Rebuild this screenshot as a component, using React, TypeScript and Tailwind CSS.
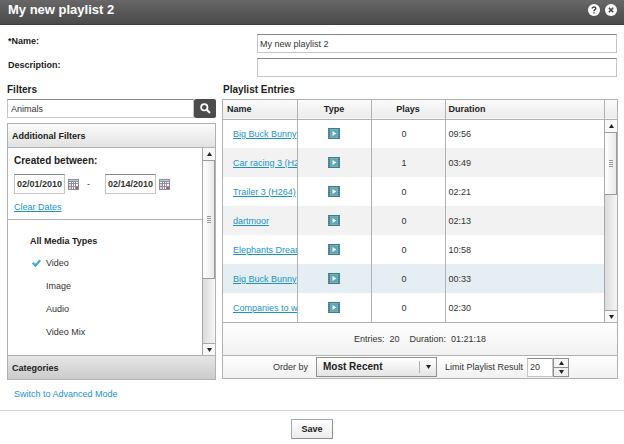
import { useState } from "react";

const entries = [
  { name: "Big Buck Bunny", plays: 0, duration: "09:56" },
  { name: "Car racing 3 (H264)", plays: 1, duration: "03:49" },
  { name: "Trailer 3 (H264)", plays: 0, duration: "02:21" },
  { name: "dartmoor", plays: 0, duration: "02:13" },
  { name: "Elephants Dream", plays: 0, duration: "10:58" },
  { name: "Big Buck Bunny", plays: 0, duration: "00:33", selected: true },
  { name: "Companies to w", plays: 0, duration: "02:30" },
];

const mediaTypes = ["Video", "Image", "Audio", "Video Mix"];

function Arrow({ up = false }: { up?: boolean }) {
  return (
    <svg viewBox="0 0 5 4" className="h-1 w-[5px] shrink-0 fill-[#222]" aria-hidden="true">
      <path d={up ? "M0 4 2.5 0 5 4z" : "M0 0h5L2.5 4z"} />
    </svg>
  );
}

function FilmIcon() {
  return (
    <svg viewBox="0 0 12 11" className="mx-auto block h-[11px] w-3" role="img" aria-label="Video">
      <rect width="12" height="11" fill="#3f7c8a" />
      <rect x="2.5" y="1.5" width="7" height="8" fill="#5fa5b3" stroke="#79adb8" />
      <path d="M1 1v9M11 1v9" stroke="#7aa9b3" strokeDasharray="1 1" />
      <path d="M4.5 3v5l3.8-2.500z" fill="#fff" />
    </svg>
  );
}

function CalendarIcon() {
  return (
    <svg viewBox="0 0 11 11" className="h-[11px] w-[11px]" aria-hidden="true">
      <rect width="11" height="11" fill="#8d8f9f" />
      <path d="M1 1h9v1H1z" fill="#c3cbe0" />
      <path d="M1 3h2v1H1zM4 3h1v1H4zM6 3h1v1H6zM8 3h2v1H8z" fill="#fff" />
      <path d="M4 5h1v2H4zM6 5h1v2H6zM8 5h2v2H8zM4 8h1v2H4zM6 8h1v2H6z" fill="#fff" />
      <path d="M1 5h2v2H1zM1 8h2v2H1z" fill="#f3c9c0" />
      <path d="M8 8h2v2H8z" fill="#c9534a" />
    </svg>
  );
}

function ScrollBar({ thumb }: { thumb: string }) {
  return (
    <div className="flex w-[13px] shrink-0 flex-col border-l border-[#a5a8a8] bg-gradient-to-r from-[#dcdcdc] to-[#f5f5f5]">
      <button aria-label="Scroll up" className="flex h-3 shrink-0 items-center justify-center bg-[#f8f8f8]">
        <Arrow up />
      </button>
      <div
        className={`flex shrink-0 flex-col items-center justify-center gap-px border-y border-r border-[#9a9c9c] bg-gradient-to-r from-white to-[#e9e9e9] ${thumb}`}
      >
        <span className="h-px w-1 bg-[#999]" />
        <span className="h-px w-1 bg-[#999]" />
        <span className="h-px w-1 bg-[#999]" />
        <span className="h-px w-1 bg-[#999]" />
      </div>
      <button
        aria-label="Scroll down"
        className="mt-auto flex h-3 shrink-0 items-center justify-center border-t border-[#a5a8a8] bg-[#f8f8f8]"
      >
        <Arrow />
      </button>
    </div>
  );
}

const field = "border border-[#c4c6c6] border-t-[#858888] bg-white outline-none";

function DateField({ label, initial }: { label: string; initial: string }) {
  return (
    <div className="flex items-center gap-[3px]">
      <input aria-label={label} defaultValue={initial} className={`h-5 w-[51px] px-[2px] font-bold ${field}`} />
      <button aria-label={`${label} calendar`}>
        <CalendarIcon />
      </button>
    </div>
  );
}

export default function App() {
  const [types, setTypes] = useState<string[]>(["Video"]);
  const toggle = (t: string) => setTypes(types.includes(t) ? types.filter((x) => x !== t) : [...types, t]);

  return (
    <div className="min-h-screen bg-white font-['Liberation_Sans',Arial,sans-serif] text-[9px] leading-3 text-[#333]">
      <header className="flex h-[25px] items-center justify-between border-b border-[#3c3c3c] bg-gradient-to-b from-[#666766] to-[#494a49] pr-[7px] pl-2 text-white">
        <h1 className="pb-1 text-[13px] leading-4 font-bold">My new playlist 2</h1>
        <div className="flex gap-[5px] pb-1">
          <button aria-label="Help">
            <svg viewBox="0 0 12 12" className="block h-3 w-3" fill="none">
              <circle cx="6" cy="6" r="6" fill="#fff" />
              <path d="M4.2 4.6c0-2.2 3.6-2.2 3.6-.2C7.8 5.700 6 5.500 6 7.200M6 8.200v1.400" stroke="#444" strokeWidth="1.500" />
            </svg>
          </button>
          <button aria-label="Close">
            <svg viewBox="0 0 12 12" className="block h-3 w-3" fill="none">
              <circle cx="6" cy="6" r="6" fill="#fff" />
              <path d="m3.800 3.800 4.400 4.400M8.200 3.800 3.800 8.200" stroke="#444" strokeWidth="1.600" />
            </svg>
          </button>
        </div>
      </header>

      <form onSubmit={(e) => e.preventDefault()}>
        <div className="flex flex-col gap-[5px] pt-[9px] pr-[7px] pl-2">
          <div className="flex">
            <label htmlFor="name" className="w-[249px] shrink-0 pt-px font-bold text-[#222]">
              *Name:
            </label>
            <input id="name" defaultValue="My new playlist 2" className={`h-[19px] min-w-0 flex-1 px-[2px] ${field}`} />
          </div>
          <div className="flex">
            <label htmlFor="description" className="w-[249px] shrink-0 pt-px font-bold text-[#222]">
              Description:
            </label>
            <input id="description" className={`h-[19px] min-w-0 flex-1 px-[2px] ${field}`} />
          </div>
        </div>

        <div className="grid grid-cols-[209px_minmax(0,1fr)] gap-x-[6px] pt-[7px] pr-[6px] pl-[7px]">
          <section>
            <h2 className="pb-[3px] text-[10px] font-bold text-[#222]">Filters</h2>
            <div className="flex">
              <input aria-label="Search" defaultValue="Animals" className={`h-[19px] min-w-0 flex-1 px-[3px] ${field}`} />
              <button aria-label="Run search" className="flex h-[19px] w-[22px] items-center justify-center rounded-xs bg-[#4b4c4b]">
                <svg viewBox="0 0 11 11" className="h-[11px] w-[11px]" fill="none" stroke="#fff">
                  <circle cx="4.300" cy="4.300" r="3.200" strokeWidth="1.700" />
                  <path d="m6.800 6.800 3.200 3.200" strokeWidth="2.200" />
                </svg>
              </button>
            </div>

            <div className="mt-[5px] border border-[#b0b2b2]">
              <button className="flex h-6 w-full items-center border-b border-[#b0b2b2] bg-gradient-to-b from-[#fbfbfb] to-[#e2e2e2] px-1 font-bold text-[#222]">
                Additional Filters
              </button>
              <div className="flex">
                <div className="min-w-0 flex-1">
                  <div className="border-b border-[#b0b2b2] px-[6px] pt-[7px] pb-[6px]">
                    <h3 className="text-[10px] font-bold text-[#222]">Created between:</h3>
                    <div className="mt-[7px] mb-[7px] flex items-center">
                      <DateField label="From" initial="02/01/2010" />
                      <span className="w-[26px] pl-2">-</span>
                      <DateField label="To" initial="02/14/2010" />
                    </div>
                    <a href="#clear" className="text-[#1a94c8] underline">
                      Clear Dates
                    </a>
                  </div>
                  <fieldset className="h-[135px] overflow-hidden px-[22px] pt-[15px]">
                    <legend className="float-left mb-1 w-full font-bold text-[#222]">All Media Types</legend>
                    {mediaTypes.map((t) => (
                      <label key={t} className="flex h-[23px] w-full items-center gap-[5px] pl-[2px]">
                        <input
                          type="checkbox"
                          checked={types.includes(t)}
                          onChange={() => toggle(t)}
                          className="peer sr-only"
                        />
                        <svg
                          viewBox="0 0 9 8"
                          className="h-2 w-[9px] opacity-0 peer-checked:opacity-100"
                          fill="none"
                          stroke="#45a9d3"
                          strokeWidth="2.400"
                        >
                          <path d="m.8 3.800 2.700 2.700L8.200 1.200" />
                        </svg>
                        {t}
                      </label>
                    ))}
                  </fieldset>
                </div>
                <ScrollBar thumb="h-[119px]" />
              </div>
              <button className="flex h-6 w-full items-center border-t border-[#b0b2b2] bg-gradient-to-b from-[#e6e6e6] to-[#cbcbcb] px-1 font-bold text-[#222]">
                Categories
              </button>
            </div>
            <a href="#advanced" className="mt-2 ml-[7px] inline-block text-[#1a94c8]">
              Switch to Advanced Mode
            </a>
          </section>

          <section>
            <h2 className="pb-[3px] pl-px text-[10px] font-bold text-[#222]">Playlist Entries</h2>
            <div className="border border-[#b0b2b2]">
              <div className="relative">
                <table className="w-full table-fixed border-collapse">
                  <colgroup>
                    <col className="w-[74px]" />
                    <col className="w-[74px]" />
                    <col className="w-[74px]" />
                    <col />
                    <col className="w-[13px]" />
                  </colgroup>
                  <thead>
                    <tr className="h-[19px] border-b border-[#b0b2b2] bg-gradient-to-b from-[#fbfbfb] to-[#ebebeb] text-[#222]">
                      <th className="border-r border-[#b0b2b2] pl-1 text-left">Name</th>
                      <th className="border-r border-[#b0b2b2]">Type</th>
                      <th className="border-r border-[#b0b2b2]">Plays</th>
                      <th className="border-r border-[#b0b2b2] pl-[3px] text-left">Duration</th>
                      <td />
                    </tr>
                  </thead>
                  <tbody>
                    {entries.map((e, i) => (
                      <tr key={i} className={`h-[29px] ${e.selected ? "bg-[#e5eef2]" : i % 2 ? "bg-[#f2f2f2]" : "bg-white"}`}>
                        <td className="overflow-hidden border-r border-[#b0b2b2] pl-[10px] whitespace-nowrap">
                          <a href={`#entry-${i}`} className="text-[#1a94c8] underline">
                            {e.name}
                          </a>
                        </td>
                        <td className="border-r border-[#b0b2b2]">
                          <FilmIcon />
                        </td>
                        <td className="border-r border-[#b0b2b2] pr-2 text-center">{e.plays}</td>
                        <td className="pl-[3px]">{e.duration}</td>
                        <td />
                      </tr>
                    ))}
                  </tbody>
                </table>
                <div className="absolute top-5 right-0 bottom-0 flex">
                  <ScrollBar thumb="h-[63px]" />
                </div>
              </div>

              <div className="flex h-[33px] items-center justify-center gap-[10px] border-t border-[#b0b2b2] bg-gradient-to-b from-white to-[#f1f1f1]">
                <span className="whitespace-pre">Entries:  20</span>
                <span className="whitespace-pre">Duration:  01:21:18</span>
              </div>
              <div className="flex h-[23px] items-center border-t border-[#b0b2b2] bg-gradient-to-b from-white to-[#f1f1f1] pl-[50px]">
                <label htmlFor="order" className="mr-2">
                  Order by
                </label>
                <div className="relative">
                  <select
                    id="order"
                    className="h-5 w-[121px] appearance-none border border-[#8d9090] bg-gradient-to-b from-white to-[#e4e4e4] pl-[6px] text-[10px] font-bold text-[#222]"
                  >
                    <option>Most Recent</option>
                  </select>
                  <span className="pointer-events-none absolute inset-y-1 right-0 flex w-[18px] items-center justify-center border-l border-[#b0b2b2]">
                    <Arrow />
                  </span>
                </div>
                <label htmlFor="limit" className="mr-1 ml-2">
                  Limit Playlist Result
                </label>
                <input id="limit" defaultValue="20" className={`h-[19px] w-[26px] px-[2px] ${field}`} />
                <div className="flex flex-col">
                  <button aria-label="Increase" className="flex h-[9px] w-4 items-center justify-center border border-b-0 border-[#8d9090] bg-[#f6f6f6]">
                    <Arrow up />
                  </button>
                  <button aria-label="Decrease" className="flex h-[10px] w-4 items-center justify-center border border-[#8d9090] bg-[#f0f0f0]">
                    <Arrow />
                  </button>
                </div>
              </div>
            </div>
          </section>
        </div>

        <footer className="mt-[10px] flex justify-center border-t border-[#d4d4d4] pt-2">
          <button
            type="submit"
            className="h-5 w-[42px] rounded-[1px] border border-[#a5a8a8] border-r-[#8d9090] border-b-[#8d9090] bg-gradient-to-b from-white to-[#ececec] font-bold text-[#222]"
          >
            Save
          </button>
        </footer>
      </form>
    </div>
  );
}
